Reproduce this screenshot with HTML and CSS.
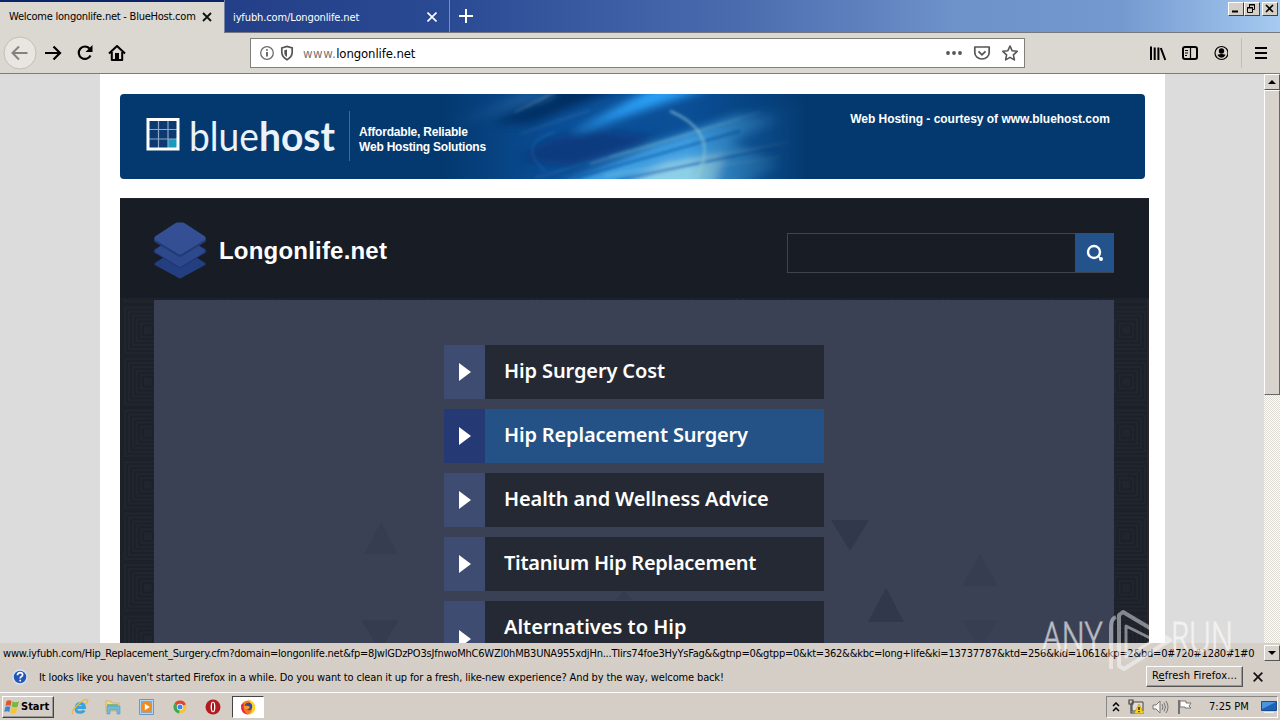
FILE: index.html
```html
<!DOCTYPE html>
<html lang="en">
<head>
<meta charset="utf-8">
<title>Welcome longonlife.net - BlueHost.com</title>
<link rel="stylesheet" href="styles.css">
</head>
<body>
<div class="screen">
  <header class="tabs">
    <div class="tab tab-active"><span class="t-tab1">Welcome longonlife.net - BlueHost.com</span><svg class="tab-x" width="10" height="10" viewBox="0 0 10 10"><path d="M1 1l8 8M9 1L1 9" stroke="#111" stroke-width="1.8"/></svg></div>
    <div class="tab tab-idle"><span class="t-tab2">iyfubh.com/Longonlife.net</span><svg class="tab-x" width="10" height="10" viewBox="0 0 10 10"><path d="M.5 .5l9 9M9.500 .5l-9 9" stroke="#fff" stroke-width="1.6"/></svg></div>
    <svg class="new-tab" width="14" height="14" viewBox="0 0 14 14"><path d="M7 0v14M0 7h14" stroke="#fff" stroke-width="2"/></svg>
    <div class="win-controls">
      <span class="win-btn"><svg width="13" height="11"><path d="M3 8.500h6" stroke="#000" stroke-width="2"/></svg></span>
      <span class="win-btn"><svg width="13" height="11"><path d="M4.500 4V1.500h5v5H8M4 2h6M2.500 4.500h5v5h-5zM2 5h6" fill="none" stroke="#000"/></svg></span>
      <span class="win-btn win-close"><svg width="13" height="11"><path d="M3 2l7 7M10 2L3 9" stroke="#000" stroke-width="1.6"/></svg></span>
    </div>
  </header>

  <nav class="toolbar">
    <div class="nav-icons">
      <svg width="34" height="34" viewBox="0 0 34 34"><circle cx="17" cy="17" r="16" fill="#e9e6e2" stroke="#c3beb8"/><path d="M24.500 17H10M16 10.500L9.500 17l6.500 6.500" fill="none" stroke="#85827e" stroke-width="2"/></svg>
      <svg width="18" height="16" viewBox="0 0 18 16"><path d="M1 8h15M9.500 1.500L16 8l-6.500 6.500" fill="none" stroke="#000" stroke-width="2.200"/></svg>
      <svg width="18" height="16" viewBox="0 0 18 16"><path d="M14.500 10.500a6.200 6.200 0 1 1-1-7" fill="none" stroke="#000" stroke-width="2.200"/><path d="M16.500 0v7h-7z"/></svg>
      <svg width="18" height="16" viewBox="0 0 18 16"><path d="M1 8.500L9 1l8 7.500M3.800 7v8h10.400V7" fill="none" stroke="#000" stroke-width="2" stroke-linejoin="round"/><path d="M7 8h4v7H7z"/></svg>
    </div>
    <div class="url">
      <svg width="36" height="16" viewBox="0 0 36 16"><circle cx="8" cy="8" r="6.300" fill="none" stroke="#6b6b6b" stroke-width="1.300"/><path d="M8 7v4.500M8 4.200v1.600" stroke="#555" stroke-width="1.700"/><path d="M22.800 3l5.200-1.500L33.200 3v4c0 4-2 6-5.200 7.800C24.800 13 22.800 11 22.800 7z" fill="none" stroke="#555" stroke-width="1.700"/><path d="M28 4.500l-2.700.8V8c0 1.800 1 3 2.700 4z" fill="#555"/></svg>
      <span class="url-text"><i>www.</i>longonlife.net</span>
      <svg class="url-tools" width="74" height="18" viewBox="0 0 74 18"><g fill="#555"><circle cx="3" cy="9" r="1.900"/><circle cx="9" cy="9" r="1.900"/><circle cx="15" cy="9" r="1.900"/></g><path d="M29.800 3h14.400v5.500a7.200 6.500 0 0 1-14.400 0z" fill="none" stroke="#555" stroke-width="1.700" stroke-linejoin="round"/><path d="M33.500 7.300l3.500 3.500 3.500-3.500" fill="none" stroke="#555" stroke-width="1.800"/><path d="M65 2l2.100 4.700 5.100.6-3.800 3.500 1 5.100L65 13.400 60.600 15.900l1-5.100-3.800-3.500 5.100-.6z" fill="none" stroke="#555" stroke-width="1.600" stroke-linejoin="round"/></svg>
    </div>
    <svg class="tools" width="78" height="16" viewBox="0 0 78 16"><path d="M1 1.500V15M4.700 2.500V15M8.400 2.500V15M10.800 3l4.500 12" stroke="#000" stroke-width="2"/><rect x="33" y="2" width="14" height="12" rx="2" fill="none" stroke="#000" stroke-width="2"/><path d="M40.500 2v12M35 5.500h3M35 8h3M35 10.500h2" stroke="#000" stroke-width="1.200"/><circle cx="71.500" cy="8" r="6.500" fill="none" stroke="#000" stroke-width="1.200"/><circle cx="71.500" cy="6" r="2.700"/><path d="M67.300 9.800q4.200-1.800 8.400 0-1.400 2.900-4.200 2.900t-4.200-2.900z"/></svg>
    <span class="tool-sep"></span>
    <svg width="12" height="12" viewBox="0 0 12 12"><path d="M0 1h12M0 6h12M0 11h12" stroke="#000" stroke-width="2"/></svg>
  </nav>

  <main class="viewport">
    <div class="gutter"></div>
    <div class="page">
      <section class="banner">
        <svg class="banner-art" width="400" height="85" viewBox="0 0 400 85">
          <defs>
            <linearGradient id="fade"><stop offset="0" stop-color="#fff" stop-opacity="0"/><stop offset=".3" stop-color="#fff"/><stop offset=".62" stop-color="#fff"/><stop offset=".92" stop-color="#fff" stop-opacity="0"/></linearGradient>
            <mask id="edge"><rect width="400" height="85" fill="url(#fade)"/></mask>
            <filter id="soft" x="-20%" y="-50%" width="140%" height="200%"><feGaussianBlur stdDeviation="5"/></filter>
            <filter id="fine" x="-20%" y="-50%" width="140%" height="200%"><feGaussianBlur stdDeviation="1.500"/></filter>
          </defs>
          <g mask="url(#edge)">
            <rect width="400" height="85" fill="#0b4f97"/>
            <g filter="url(#soft)">
              <path d="M90 30L190-10H120L50 30z" fill="#062d62"/>
              <path d="M80 66q30-31 80-29l60 6-90 30z" fill="#083a80"/>
              <path d="M130 40L215-8h60L185 22z" fill="#2b9ff5"/>
              <path d="M110 100L190 66 290 20 420 0 420 60 300 110z" fill="#1468b4"/>
              <path d="M120 92L215 50 300 22 340 25 290 48 340 70 270 110z" fill="#3f9fe0"/>
              <path d="M160 105l65-35 60-10-15 45z" fill="#8cd0e8"/>
              <path d="M20 30L120 0H80L0 32z" fill="#2769ad"/>
            </g>
            <g filter="url(#fine)" fill="none">
              <path d="M75 18L115-2M170 63L320 18M165 82L350 48M150 70L300 25M190 84L340 63" stroke="#92c9dc" stroke-width="1.800" opacity=".4"/>
              <path d="M95 84L190 56M80 40L150 16" stroke="#5fa5dc" stroke-width="1.800" opacity=".25"/>
              <path d="M135 84L300 37M175 87L340 52" stroke="#0751a8" stroke-width="2.500" opacity=".6"/>
              <path d="M230 17c35 15 43 37 26 68" stroke="#a6dfe0" stroke-width="2" opacity=".65"/>
              <path d="M105 77Q75 50 115 38" stroke="#439fe8" stroke-width="1.500" opacity=".3"/>
            </g>
          </g>
        </svg>
        <svg class="bh-logo" width="206" height="50" viewBox="0 0 206 50">
          <rect x="3" y="9" width="28" height="28" fill="#0b3970"/><path d="M22 28h9v9H22z" fill="#189bbd"/>
          <path d="M12.500 9v29M22 9v29M3 18.500h29M3 28h29" stroke="#8dabc9" stroke-width="1.200"/><rect x="2" y="8.500" width="30" height="29.500" fill="none" stroke="#fff" stroke-width="3"/>
          <text class="bh-light" x="43" y="40" textLength="70" lengthAdjust="spacingAndGlyphs">blue</text><text class="bh-bold" x="113" y="40" textLength="76" lengthAdjust="spacingAndGlyphs">host</text>
          <path d="M203.500 0v50" stroke="#2b6fae"/>
        </svg>
        <p class="slogan">Affordable, Reliable<br>Web Hosting Solutions</p>
        <p class="courtesy">Web Hosting - courtesy of www.bluehost.com</p>
      </section>

      <section class="park">
        <div class="park-head">
          <svg width="54" height="60" viewBox="0 0 54 60"><g stroke-linejoin="round"><path d="M3 44l24-15 24 15-24 13z" fill="#233f80" stroke="#233f80" stroke-width="3"/><path d="M3 31l24-15 24 15-24 14z" fill="#1c3163" stroke="#1c3163" stroke-width="5"/><path d="M4 31l23-15 23 15-23 14z" fill="#2d498b" stroke="#2d498b" stroke-width="4"/><path d="M4 20L27 6l23 14-23 14z" fill="#233b75" stroke="#233b75" stroke-width="6"/><path d="M4 18L24 5h6l20 13-23 14z" fill="#354f94" stroke="#354f94" stroke-width="5"/></g></svg>
          <h1>Longonlife.net</h1>
          <div class="search"><span class="search-btn"><svg width="18" height="18" viewBox="0 0 18 18"><circle cx="8" cy="8" r="6" fill="none" stroke="#fff" stroke-width="2.400"/><circle cx="15" cy="15" r="2" fill="#fff"/><path d="M12 12l3 3" stroke="#fff" stroke-width="1.500"/></svg></span></div>
        </div>
        <div class="park-body">
          <svg class="weave" width="1029" height="345">
            <defs><pattern id="maze" x="2" y="6.500" width="51.500" height="51.500" patternUnits="userSpaceOnUse"><rect width="52" height="52" fill="#21252e"/><g fill="none" stroke="#1a1f28" stroke-width="1.600"><rect x="1" y="1" width="49.500" height="49.500"/><rect x="5" y="5" width="41.500" height="41.500"/><rect x="9" y="9" width="33.500" height="33.500"/><rect x="13" y="13" width="25.500" height="25.500"/><rect x="17" y="17" width="17.500" height="17.500"/><rect x="21" y="21" width="9.500" height="9.500"/></g></pattern></defs>
            <rect width="1029" height="345" fill="url(#maze)"/>
            <path d="M1028 0v345" stroke="#2b2729" stroke-width="2"/>
            <rect x="34" y="2" width="960" height="343" fill="#3b4154"/>
            <g fill="#363c50"><path d="M711 222h38l-19 31z" fill="#32384b"/><path d="M784 324l-18-34-18 34z" fill="#32384b"/><path d="M842 288l18-32 18 32z" opacity=".8"/><path d="M241 322h38l-19 30z"/><path d="M244 256l17-32 17 32z" opacity=".7"/><path d="M496 302l8-10 8 10z"/><path d="M842 322h36l-18 30z" opacity=".6"/></g>
          </svg>
          <ul class="links">
            <li><b></b><span class="l1">Hip Surgery Cost</span></li>
            <li class="hot"><b></b><span class="l2">Hip Replacement Surgery</span></li>
            <li><b></b><span class="l3">Health and Wellness Advice</span></li>
            <li><b></b><span class="l4">Titanium Hip Replacement</span></li>
            <li><b></b><span class="l5">Alternatives to Hip<br>Replacement</span></li>
          </ul>
        </div>
      </section>
    </div>
    <div class="gutter gutter-right"></div>
    <div class="scroll"><span class="sb"><svg width="8" height="4"><path d="M0 4l4-4 4 4z"/></svg></span><span class="thumb"></span></div>
  </main>

  <div class="status"><span class="status-text">www.iyfubh.com/Hip_Replacement_Surgery.cfm?domain=longonlife.net&amp;fp=8JwlGDzPO3sJfnwoMhC6WZl0hMB3UNA955xdjHn...TIirs74foe3HyYsFag&amp;&amp;gtnp=0&amp;gtpp=0&amp;kt=362&amp;&amp;kbc=long+life&amp;ki=13737787&amp;ktd=256&amp;kld=1061&amp;kp=2&amp;bd=0#720#1280#1#0</span><span class="sb"><svg width="8" height="4"><path d="M0 0l4 4 4-4z"/></svg></span></div>

  <div class="notice">
    <svg width="16" height="16" viewBox="0 0 16 16"><circle cx="8" cy="8" r="7" fill="#2457b5" stroke="#d5e2f5" stroke-width="1.500"/><path d="M5.500 6.200q0-2.500 2.600-2.500t2.500 2.200q0 1-1.200 1.700T8.200 9.500M8.200 10.800v1.700" fill="none" stroke="#fff" stroke-width="1.700"/></svg>
    <span class="notice-text">It looks like you haven't started Firefox in a while. Do you want to clean it up for a fresh, like-new experience? And by the way, welcome back!</span>
    <span class="refresh"><span>R<u>e</u>fresh Firefox...</span></span>
    <svg width="10" height="10" viewBox="0 0 10 10"><path d="M.7.7l8.600 8.600M9.300.7L.7 9.300" stroke="#111" stroke-width="1.700"/></svg>
  </div>

  <footer class="taskbar">
    <div class="start"><svg width="16" height="16" viewBox="0 0 16 16"><path d="M2.500 2Q5 .5 7.500 2L6.500 7Q4 5.500 1.500 7z" fill="#e65228"/><path d="M8.500 2.500Q11 4 15 2.500L13.500 8Q11 9 7.500 7.500z" fill="#76b841"/><path d="M1.300 8Q4 6.500 6.300 8l-1 5Q3 11.500.3 13z" fill="#3b83d4"/><path d="M7.300 8.500Q10 10 13.300 9l-1.500 5Q9 15 6.300 13.500z" fill="#f6c52e"/></svg><span>Start</span></div>
    <div class="quick">
      <svg width="18" height="18" viewBox="0 0 18 18"><path d="M5 9.500h8.500Q13 5.500 9.300 5.500T5 10t4.300 4.300q2.500 0 4-2" fill="none" stroke="#3aa3df" stroke-width="3"/><path d="M2 16Q-.5 14 6.500 7T16.500 2q1 1-1.500 4" fill="none" stroke="#e9bd35" stroke-width="1.400"/></svg>
      <svg width="18" height="18" viewBox="0 0 18 18"><path d="M2 3h5l1 2h7v8H2z" fill="#f2d981" stroke="#c8ac55" stroke-width=".7"/><path d="M3 6h11v2H3z" fill="#83ba72"/><path d="M3 8h13v8h-3v-4H6v4H3z" fill="#73b8df" stroke="#4f9bc7" stroke-width=".6"/></svg>
      <svg width="18" height="18" viewBox="0 0 18 18"><path d="M1.500 1.500h14v15h-14z" fill="#b5d6f1" stroke="#6998c7"/><path d="M3 3h11v12H3z" fill="#77abd8"/><circle cx="8.500" cy="9" r="5.600" fill="#f28a1c"/><path d="M6.800 5.800l5 3.200-5 3.200z" fill="#fff"/></svg>
      <svg width="18" height="18" viewBox="0 0 18 18"><circle cx="9" cy="9" r="6.500" fill="#f4c531"/><path d="M9 9L3.400 5.700A6.500 6.500 0 0 1 14.900 6.200z" fill="#df4332"/><path d="M9 9L3.400 5.700A6.500 6.500 0 0 0 8 15.400z" fill="#38a852"/><circle cx="9" cy="9" r="3.200" fill="#fff"/><circle cx="9" cy="9" r="2.500" fill="#4285e5"/></svg>
      <svg width="18" height="18" viewBox="0 0 18 18"><circle cx="9" cy="9" r="7.500" fill="#b51b1e"/><ellipse cx="9" cy="9" rx="2.400" ry="5.300" fill="#fff"/><ellipse cx="9" cy="9" rx="1" ry="4.400" fill="#8d1416"/></svg>
      <span class="running"><svg width="18" height="18" viewBox="0 0 18 18"><circle cx="9" cy="9.500" r="7" fill="#f6791d"/><path d="M9 1q8 3 7 10-1 5-6 5.500Q15 12 12 6z" fill="#ffd22e"/><path d="M2 7q0 9 7 9.500Q3 14 5 5z" fill="#e9234a"/><circle cx="9.500" cy="8.500" r="3.700" fill="#3249a5"/><path d="M5 8q4-1 6 1-2 4-5 2z" fill="#f8992a"/></svg></span>
    </div>
    <div class="tray">
      <svg width="8" height="10" viewBox="0 0 8 10"><path d="M1 4l3-3 3 3M1 9l3-3 3 3" fill="none" stroke="#000" stroke-width="1.500"/></svg>
      <svg width="17" height="16" viewBox="0 0 17 16"><path d="M4 3h11v9H4z" fill="#ddd" stroke="#444"/><path d="M1 1h4v4H1zM3 5v9h4" fill="none" stroke="#444" stroke-width="1.200"/><path d="M11 5l5 9.500H6z" fill="#f8ce22" stroke="#a98000" stroke-width=".5"/><path d="M11 8v3M11 12v1.300" stroke="#000" stroke-width="1.200"/></svg>
      <svg width="17" height="14" viewBox="0 0 17 14"><path d="M1 5h3l4-4v12L4 9H1z" fill="#f5f5f5" stroke="#777"/><path d="M10 4q2 3 0 6M12 2.500q3 4.500 0 9M14 1q4 6 0 12" fill="none" stroke="#777"/></svg>
      <svg width="16" height="16" viewBox="0 0 16 16"><path d="M2 1v14" stroke="#555" stroke-width="1.500"/><path d="M3 2h6v2h5l-2 3 2 2H8V8H3z" fill="#fff" stroke="#777"/></svg>
      <span class="clock">7:25 PM</span>
      <svg width="16" height="14" viewBox="0 0 16 14"><path d="M.5 1.500h15v9H.5z" fill="#1c62b9" stroke="#174c90"/><path d="M1 2h14L1 9z" fill="#4c94df"/><path d="M3 12h10v1H3z" fill="#eee"/></svg>
    </div>
  </footer>

  <svg class="mark" width="200" height="72" viewBox="0 0 200 72">
    <g fill="none" stroke="#fff" stroke-opacity=".46" stroke-width="4" stroke-linejoin="round">
      <path d="M71 63V20q0-7 5-9"/><path d="M83 6l47 28-46 29-5-3V9z"/><path d="M86 20l28 14-28 17z" stroke-width="3"/>
    </g>
    <text x="2" y="46" textLength="60" lengthAdjust="spacingAndGlyphs">ANY</text><text x="131" y="46" textLength="62" lengthAdjust="spacingAndGlyphs">RUN</text>
  </svg>
</div>
</body>
</html>
```

FILE: styles.css
```css
* { box-sizing: border-box; }
body { margin: 0; overflow: hidden; background: #d5cec7; font: 11px/14px "DejaVu Sans Condensed", "DejaVu Sans", sans-serif; font-stretch: condensed; color: #000; }
svg { display: block; flex: none; }
p, h1, ul { margin: 0; padding: 0; }
.screen { width: 1280px; height: 720px; display: flex; flex-direction: column; position: relative; overflow: hidden; white-space: nowrap; }

.tabs { height: 33px; display: flex; background: linear-gradient(90deg, #0a246a 0, #233f87 225px, #2a4a94 450px, #4c6eb0 750px, #6d91c9 950px, #7399d0 1120px, #a6caf0 1280px); border-bottom: 1px solid #77787b; }
.tab { display: flex; align-items: center; justify-content: space-between; }
.tab-active { width: 224px; height: 33px; padding: 0 12px 1px 9px; background: #dbd7d1; border-top: 2px solid #0a246a; }
.tab-idle { width: 226px; padding: 1px 12px 0 8px; color: #fff; border-left: 1px solid #7783a5; border-right: 1px solid #7590bd; }
.t-tab1 { letter-spacing: -.23px; }
.t-tab2 { letter-spacing: -.12px; padding-top: 2px; }
.new-tab { margin: 9px 0 0 9px; }
.win-controls { display: flex; margin: 2px 2px 0 auto; height: 14px; }
.win-btn { width: 16px; height: 14px; background: #d4d0c8; border: 1px solid; border-color: #fff #404040 #404040 #fff; }
.win-close { margin-left: 2px; }

.toolbar { height: 41px; flex: none; display: flex; align-items: center; background: #dbd7d1; border-bottom: 1px solid #7e7c79; padding-left: 3px; }
.nav-icons { display: flex; align-items: center; width: 247px; gap: 14px; }
.nav-icons svg:first-child { margin-right: -7px; }
.url { width: 775px; height: 30px; display: flex; align-items: center; background: #fff; border: 1px solid #817f7c; padding: 0 5px 0 8px; }
.url-text { margin-left: 8px; font-size: 13px; letter-spacing: 0; padding-top: 1px; }
.url-text i { font-style: normal; color: #777; letter-spacing: .5px; }
.url-text { letter-spacing: -.1px; }
.url-tools { margin-left: auto; }
.tools { margin-left: 125px; }
.tool-sep { width: 1px; height: 30px; background: #c1bdb8; margin: 0 13px 0 13px; }

.viewport { height: 569px; flex: none; display: flex; overflow: hidden; background: #fff; }
.gutter { width: 100px; background: #dcdcdc; }
.gutter-right { width: 99px; }
.page { width: 1065px; padding: 20px 16px 0 20px; overflow: hidden; }
.banner { position: relative; width: 1025px; height: 85px; border-radius: 4px; background: #04396f; overflow: hidden; display: flex; color: #fff; font: bold 12px/15px "Liberation Sans", sans-serif; }
.banner-art { position: absolute; left: 320px; top: 0; }
.bh-logo { margin: 17px 0 0 26px; position: relative; }
.bh-light, .bh-bold { font-family: Lato, sans-serif; font-size: 40px; fill: #eaf2fa; font-weight: 400; }
.bh-bold { font-weight: 700; }
.slogan { position: relative; margin: 31px 0 0 7px; letter-spacing: -.2px; }
.courtesy { margin: 18px 35px 0 auto; letter-spacing: -.02px; }

.park { width: 1029px; margin-top: 19px; }
.park-head { height: 100px; background: #171c25; display: flex; align-items: center; padding: 3px 35px 0 33px; border-top: 1px solid #22262d; }
h1 { color: #fff; font: bold 24px/30px "Liberation Sans", sans-serif; margin-left: 12px; padding-top: 2px; letter-spacing: .2px; }
.search { margin: 5px 0 0 auto; width: 327px; height: 40px; border: 1px solid #3f444d; display: flex; justify-content: flex-end; }
.search-btn { width: 39px; height: 39px; margin: -1px -1px 0 0; background: #24538b; display: flex; align-items: center; justify-content: center; padding: 1px 0 0 0; }
.park-body { position: relative; height: 345px; overflow: hidden; }
.weave { position: absolute; left: 0; top: 0; }
.links { position: relative; list-style: none; width: 380px; margin: 47px 0 0 324px; display: grid; gap: 10px; color: #fff; font: 600 20px/22px "Noto Sans", sans-serif; }
.links li { min-height: 54px; display: flex; background: #252933; }
.links b { width: 41px; background: #3d4c70; display: flex; align-items: center; padding-left: 15px; }
.links b::after { content: ""; border: solid transparent; border-width: 9.5px 0 9.5px 12px; border-left-color: #fff; }
.links span { padding: 15px 0 17px 19px; }
.links .l1 { letter-spacing: -.12px; }
.links .l2 { letter-spacing: -.17px; }
.links .l3 { letter-spacing: -.12px; }
.links .l4 { letter-spacing: -.28px; }
.links .l5 { line-height: 26px; padding: 13px 0 11px 19px; }
.links .hot { background: #245286; }
.links .hot b { background: #253a75; }

.scroll { width: 16px; display: flex; flex-direction: column; background: repeating-conic-gradient(#fff 0 25%, #dcd8d2 0 50%) 0 0 / 2px 2px; }
.sb { width: 16px; height: 16px; flex: none; display: flex; align-items: center; justify-content: center; background: #d8d3cc; border: 1px solid; border-color: #fff #555 #555 #fff; }
.thumb { height: 305px; background: #d8d3cc; border: 1px solid; border-color: #fff #666 #666 #fff; }

.status { height: 19px; display: flex; align-items: center; justify-content: space-between; padding-left: 3px; background: #d6cfc8; }
.status-text { padding-top: 2px; line-height: 17px; letter-spacing: -.215px; }
.notice { height: 31px; display: flex; align-items: center; padding: 0 17px 0 12px; border-bottom: 1px solid #fff; }
.notice-text { margin-left: 11px; padding-top: 1px; letter-spacing: -.14px; }
.refresh { width: 97px; height: 21px; margin: 0 10px 2px auto; display: flex; align-items: center; justify-content: center; letter-spacing: .15px; border: 1px solid; border-color: #fff #555 #555 #fff; box-shadow: inset -1px -1px #999; }
.taskbar { height: 27px; display: flex; align-items: center; padding: 1px 2px 1px; }
.start { width: 52px; height: 22px; display: flex; align-items: center; padding-left: 1px; gap: 1px; font-weight: bold; border: 1px solid; border-color: #fff #444 #444 #fff; box-shadow: inset -1px -1px #999; }
.quick { display: flex; align-items: center; margin-left: 17px; gap: 15.3px; }
.running { width: 32px; height: 22px; margin-left: -5px; display: flex; align-items: center; justify-content: center; background: #fff; border: 1px solid; border-color: #444 #fff #fff #444; }
.tray { width: 172px; height: 22px; margin-left: auto; display: flex; align-items: center; gap: 7.5px; padding-left: 5px; border: 1px solid; border-color: #888 #fff #fff #888; }
.clock { margin-left: 9px; width: 44px; padding-top: 1px; }

.mark { position: absolute; left: 1040px; top: 606px; }
.mark text { font: 300 42px "Open Sans", sans-serif; fill: #fff; fill-opacity: .5; stroke: #fff; stroke-opacity: .4; stroke-width: 1.5px; }
```
